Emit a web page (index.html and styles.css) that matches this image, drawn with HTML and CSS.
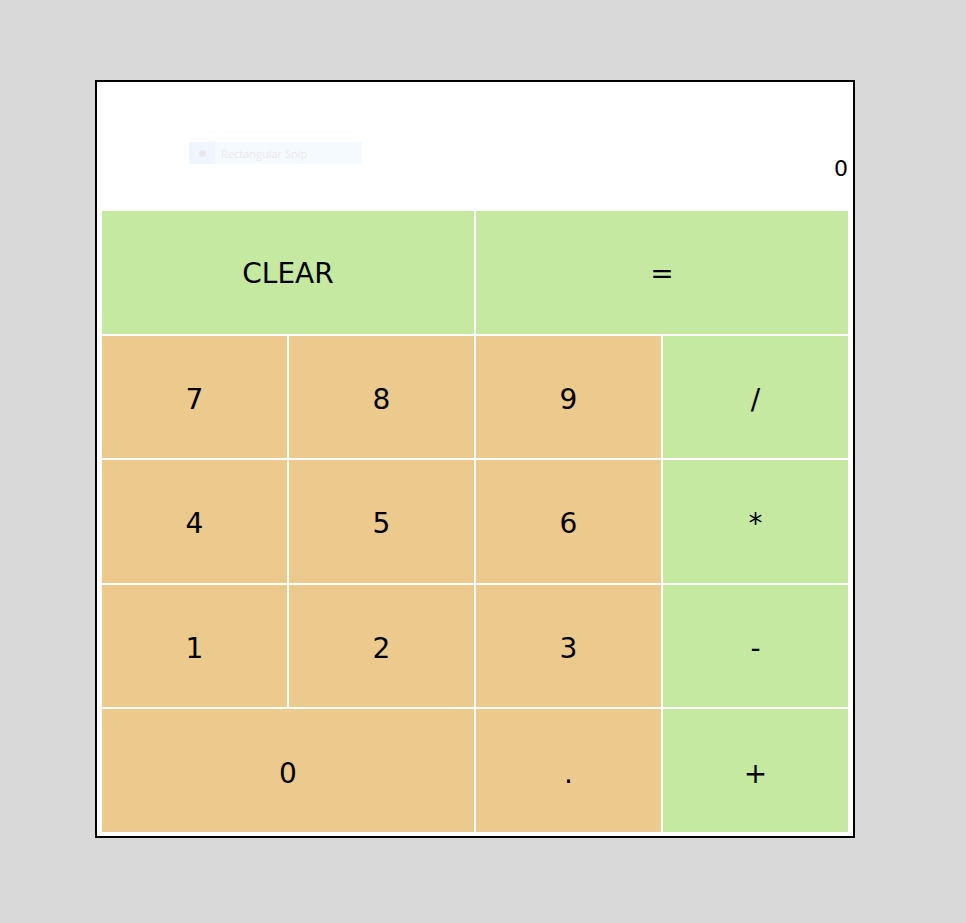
FILE: index.html
```html
<!DOCTYPE html>
<html>
<head>
<meta charset="utf-8">
<title>Calculator</title>
<link rel="stylesheet" href="styles.css">
</head>
<body>
<div class="calc">
  <div class="display">0</div>
  <div class="snip"><span class="snip-icon"><span class="snip-dot"></span></span><span class="snip-text">Rectangular Snip</span></div>
  <div class="keys">
    <button class="key op wide top">CLEAR</button>
    <button class="key op wide top">=</button>
    <button class="key num">7</button>
    <button class="key num">8</button>
    <button class="key num">9</button>
    <button class="key op">/</button>
    <button class="key num">4</button>
    <button class="key num">5</button>
    <button class="key num">6</button>
    <button class="key op">*</button>
    <button class="key num">1</button>
    <button class="key num">2</button>
    <button class="key num">3</button>
    <button class="key op">-</button>
    <button class="key num wide">0</button>
    <button class="key num">.</button>
    <button class="key op">+</button>
  </div>
</div>
</body>
</html>
```
FILE: styles.css
```css
html, body {
  margin: 0;
  padding: 0;
  background: #d9d9d9;
}
body {
  font-family: "DejaVu Sans", sans-serif;
}
.calc {
  position: relative;
  box-sizing: border-box;
  width: 760px;
  margin: 80px 0 0 95px;
  border: 2px solid #000;
  background: #fff;
  padding: 5px 5px 4px 5px;
}
.display {
  box-sizing: border-box;
  height: 124px;
  padding-top: 69px;
  text-align: right;
  font-size: 22px;
  line-height: 26px;
  color: #000;
}
.snip {
  position: absolute;
  left: 92px;
  top: 60px;
  width: 173px;
  height: 22px;
  background: #f5faff;
  display: flex;
  align-items: center;
}
.snip-icon {
  width: 26px;
  height: 22px;
  background: #eff6ff;
  display: flex;
  align-items: center;
  justify-content: center;
}
.snip-dot {
  width: 7px;
  height: 7px;
  border-radius: 50%;
  background: #ebe6ee;
}
.snip-text {
  margin-left: 6px;
  font-family: "Open Sans", sans-serif;
  font-size: 11px;
  color: #efe7ea;
}
.keys {
  display: grid;
  grid-template-columns: repeat(4, 1fr);
  grid-template-rows: repeat(5, 1fr);
  gap: 2px;
  height: 621px;
}
.key {
  border: none;
  margin: 0;
  padding: 5px 0 0 0;
  font-family: "DejaVu Sans", sans-serif;
  font-size: 28px;
  color: #000;
  cursor: pointer;
}
.key.top {
  padding-top: 2px;
}
.wide {
  grid-column: span 2;
}
.num {
  background: #ecc98c;
}
.op {
  background: #c6e9a2;
}
```
